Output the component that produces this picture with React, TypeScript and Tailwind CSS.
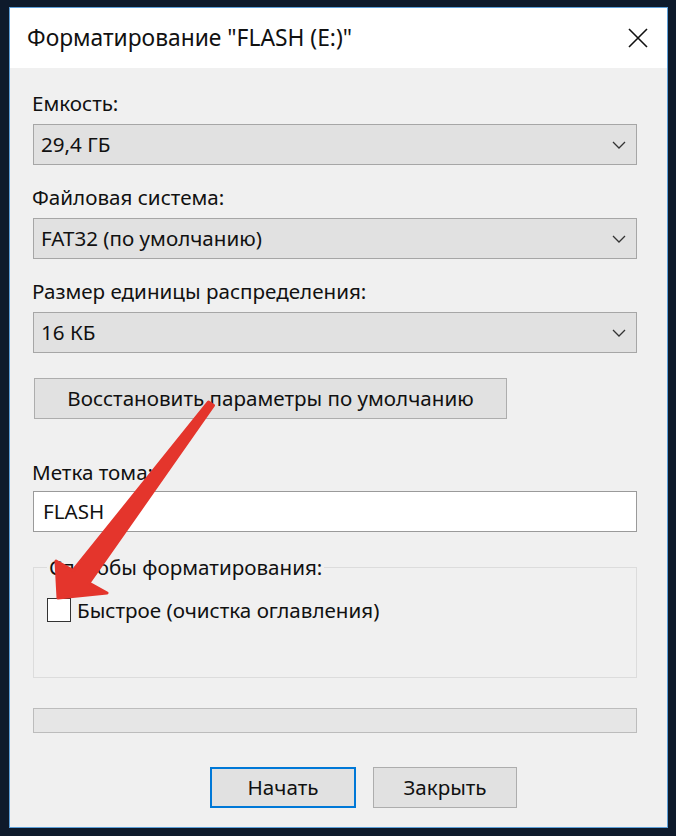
import React from "react";

const Chevron = () => (
  <svg width="14" height="8" viewBox="0 0 14 8" fill="none">
    <path d="M1 1l6 6 6-6" stroke="#333" strokeWidth="1.3" />
  </svg>
);

const Combo = ({ value }: { value: string }) => (
  <div className="h-[41px] border border-[#a6a6a6] bg-[#e1e1e1] flex items-center justify-between pl-[7px] pr-[10px]">
    <span>{value}</span>
    <Chevron />
  </div>
);

const Label = ({ text, className = "" }: { text: string; className?: string }) => (
  <div className={`h-[26px] leading-[26px] -ml-[1px] ${className}`}>{text}</div>
);

export default function App() {
  return (
    <div className="relative w-[676px] h-[836px] overflow-hidden bg-[#0e1a2b] pl-[9px] pt-[7px] font-['Noto_Sans',sans-serif] text-[20.6px] text-[#111]">
      <div className="w-[659px] h-[821px] border border-[#5d9fd8] bg-[#f0f0f0] flex flex-col">
        {/* title bar */}
        <div className="h-[60px] bg-white flex items-center justify-between pl-[17px] pr-[19px]">
          <span className="text-[22.8px] leading-[28px]">Форматирование "FLASH (E:)"</span>
          <svg width="20" height="20" viewBox="0 0 20 20" fill="none">
            <path d="M1 1l18 18M19 1L1 19" stroke="#111" strokeWidth="1.6" />
          </svg>
        </div>

        <div className="flex-1 flex flex-col pl-[23px] pr-[30px] pt-[22px]">
          <Label text="Емкость:" />
          <div className="mt-[8px]">
            <Combo value="29,4 ГБ" />
          </div>

          <Label text="Файловая система:" className="mt-[19px]" />
          <div className="mt-[8px]">
            <Combo value="FAT32 (по умолчанию)" />
          </div>

          <Label text="Размер единицы распределения:" className="mt-[19px]" />
          <div className="mt-[8px]">
            <Combo value="16 КБ" />
          </div>

          <button className="mt-[25px] ml-[1px] w-[473px] h-[41px] border border-[#adadad] bg-[#e1e1e1] flex items-center justify-center">
            Восстановить параметры по умолчанию
          </button>

          <Label text="Метка тома:" className="mt-[40px]" />
          <div className="mt-[6px] h-[41px] border border-[#9a9a9a] bg-white flex items-center pl-[9px]">
            FLASH
          </div>

          <fieldset className="mt-[22px] h-[124px] border border-[#dcdcdc] px-[13px] pt-[17px]">
            <legend className="px-[2px] leading-[26px]">Способы форматирования:</legend>
            <div className="flex items-center gap-[6px]">
              <div className="w-[24px] h-[24px] border border-[#333] bg-white" />
              <span className="leading-[26px]">Быстрое (очистка оглавления)</span>
            </div>
          </fieldset>

          <div className="mt-[30px] h-[25px] border border-[#bcbcbc] bg-[#e6e6e6]" />

          <div className="mt-[34px] flex gap-[17px] pl-[177px]">
            <button className="w-[146px] h-[41px] border-2 border-[#0078d7] bg-[#e1e1e1] flex items-center justify-center">
              Начать
            </button>
            <button className="w-[144px] h-[41px] border border-[#adadad] bg-[#e1e1e1] flex items-center justify-center">
              Закрыть
            </button>
          </div>
        </div>
      </div>

      {/* red arrow drawn over the screenshot */}
      <svg className="absolute inset-0 pointer-events-none" width="676" height="836" viewBox="0 0 676 836">
        <polygon
          points="213.5,405.5 89,583 107,593 58,598 56,561 73,570.5 208.5,402"
          fill="#e4352c"
          stroke="#e4352c"
          strokeWidth="3"
          strokeLinejoin="round"
        />
      </svg>
    </div>
  );
}
